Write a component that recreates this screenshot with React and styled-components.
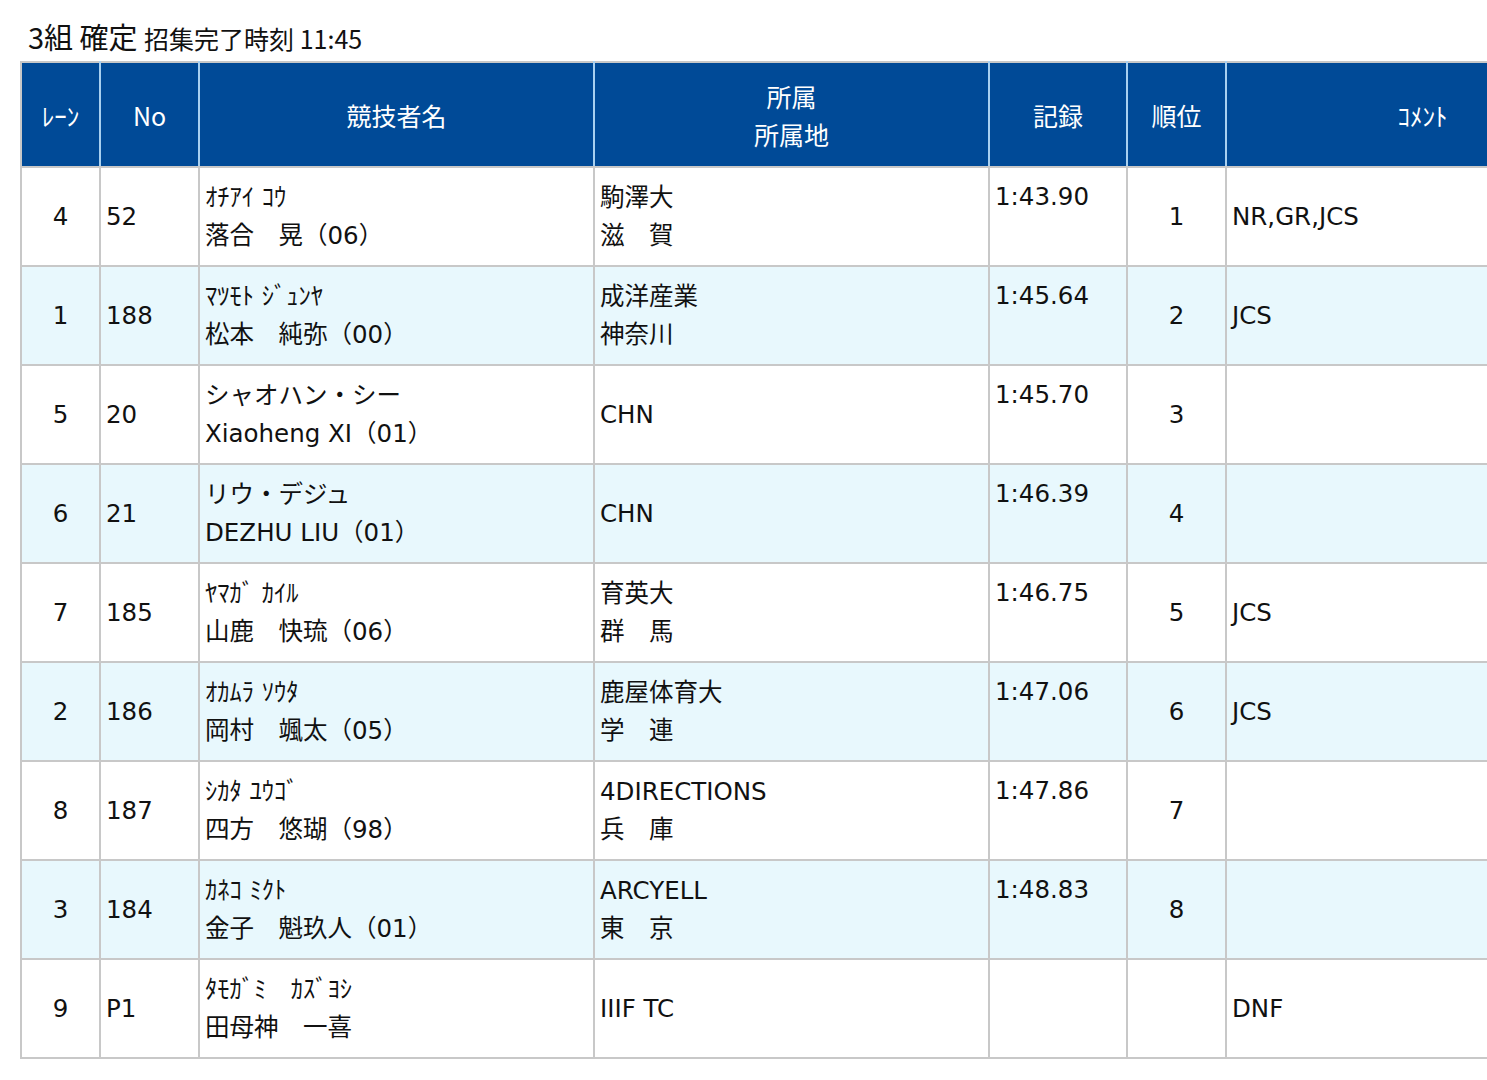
import React from "react";
import styled, { createGlobalStyle } from "styled-components";

const Global = createGlobalStyle`
  html, body { margin: 0; padding: 0; background: #fff; overflow: hidden; }
  body { font-family: "DejaVu Sans", "Noto Sans CJK JP", sans-serif; color: #111; }
`;

const Page = styled.div`
  padding: 16px 0 0 20px;
  width: 1700px;
`;

const Title = styled.div`
  font-size: 29px;
  line-height: 40px;
  margin: 0 0 3px 8px;
  font-family: "Noto Sans CJK JP", sans-serif;
  small { font-size: 25px; }
`;

const Table = styled.table`
  border-collapse: collapse;
  width: 1600px;
  table-layout: fixed;
  font-size: 24.5px;
  font-family: "DejaVu Sans", "Noto Sans CJK JP", sans-serif;
`;

const Th = styled.th`
  background: #004a97;
  color: #fff;
  font-weight: normal;
  height: 103px;
  border: 2px solid #c8c8c8;
  border-left-color: #a8d0f0;
  border-right-color: #a8d0f0;
  padding: 0;
  line-height: 38px;
  font-size: 25px;
  font-family: "Noto Sans CJK JP", sans-serif;
  &:first-child { border-left-color: #c8c8c8; }
`;

const Tr = styled.tr`
  height: 99px;
  background: ${p => (p.$alt ? "#e8f8fd" : "#fff")};
`;

const Td = styled.td`
  border: 2px solid #c8c8c8;
  padding: 0 5px;
  text-align: ${p => p.$align || "left"};
  vertical-align: ${p => (p.$top ? "top" : "middle")};
  padding-top: ${p => (p.$top ? "10px" : "0")};
  line-height: 38px;
  white-space: nowrap;
`;

const Line = styled.div``;

const rows = [
  ["4", "52", "ｵﾁｱｲ ｺｳ", "落合　晃（06）", "駒澤大", "滋　賀", "1:43.90", "1", "NR,GR,JCS"],
  ["1", "188", "ﾏﾂﾓﾄ ｼﾞｭﾝﾔ", "松本　純弥（00）", "成洋産業", "神奈川", "1:45.64", "2", "JCS"],
  ["5", "20", "シャオハン・シー", "Xiaoheng XI（01）", "CHN", null, "1:45.70", "3", ""],
  ["6", "21", "リウ・デジュ", "DEZHU LIU（01）", "CHN", null, "1:46.39", "4", ""],
  ["7", "185", "ﾔﾏｶﾞ ｶｲﾙ", "山鹿　快琉（06）", "育英大", "群　馬", "1:46.75", "5", "JCS"],
  ["2", "186", "ｵｶﾑﾗ ｿｳﾀ", "岡村　颯太（05）", "鹿屋体育大", "学　連", "1:47.06", "6", "JCS"],
  ["8", "187", "ｼｶﾀ ﾕｳｺﾞ", "四方　悠瑚（98）", "4DIRECTIONS", "兵　庫", "1:47.86", "7", ""],
  ["3", "184", "ｶﾈｺ ﾐｸﾄ", "金子　魁玖人（01）", "ARCYELL", "東　京", "1:48.83", "8", ""],
  ["9", "P1", "ﾀﾓｶﾞﾐ　ｶｽﾞﾖｼ", "田母神　一喜", "IIIF TC", null, "", "", "DNF"],
];

export default function App() {
  return (
    <Page>
      <Global />
      <Title>3組 確定 <small>招集完了時刻 11:45</small></Title>
      <Table>
        <colgroup>
          <col style={{ width: 79 }} />
          <col style={{ width: 99 }} />
          <col style={{ width: 395 }} />
          <col style={{ width: 395 }} />
          <col style={{ width: 138 }} />
          <col style={{ width: 99 }} />
          <col />
        </colgroup>
        <thead>
          <tr>
            <Th>ﾚｰﾝ</Th>
            <Th>No</Th>
            <Th>競技者名</Th>
            <Th>所属<br />所属地</Th>
            <Th>記録</Th>
            <Th>順位</Th>
            <Th>ｺﾒﾝﾄ</Th>
          </tr>
        </thead>
        <tbody>
          {rows.map((r, i) => (
            <Tr key={i} $alt={i % 2 === 1}>
              <Td $align="center">{r[0]}</Td>
              <Td>{r[1]}</Td>
              <Td><Line>{r[2]}</Line><Line>{r[3]}</Line></Td>
              <Td>{r[5] ? <><Line>{r[4]}</Line><Line>{r[5]}</Line></> : r[4]}</Td>
              <Td $top>{r[6]}</Td>
              <Td $align="center">{r[7]}</Td>
              <Td>{r[8]}</Td>
            </Tr>
          ))}
        </tbody>
      </Table>
    </Page>
  );
}
